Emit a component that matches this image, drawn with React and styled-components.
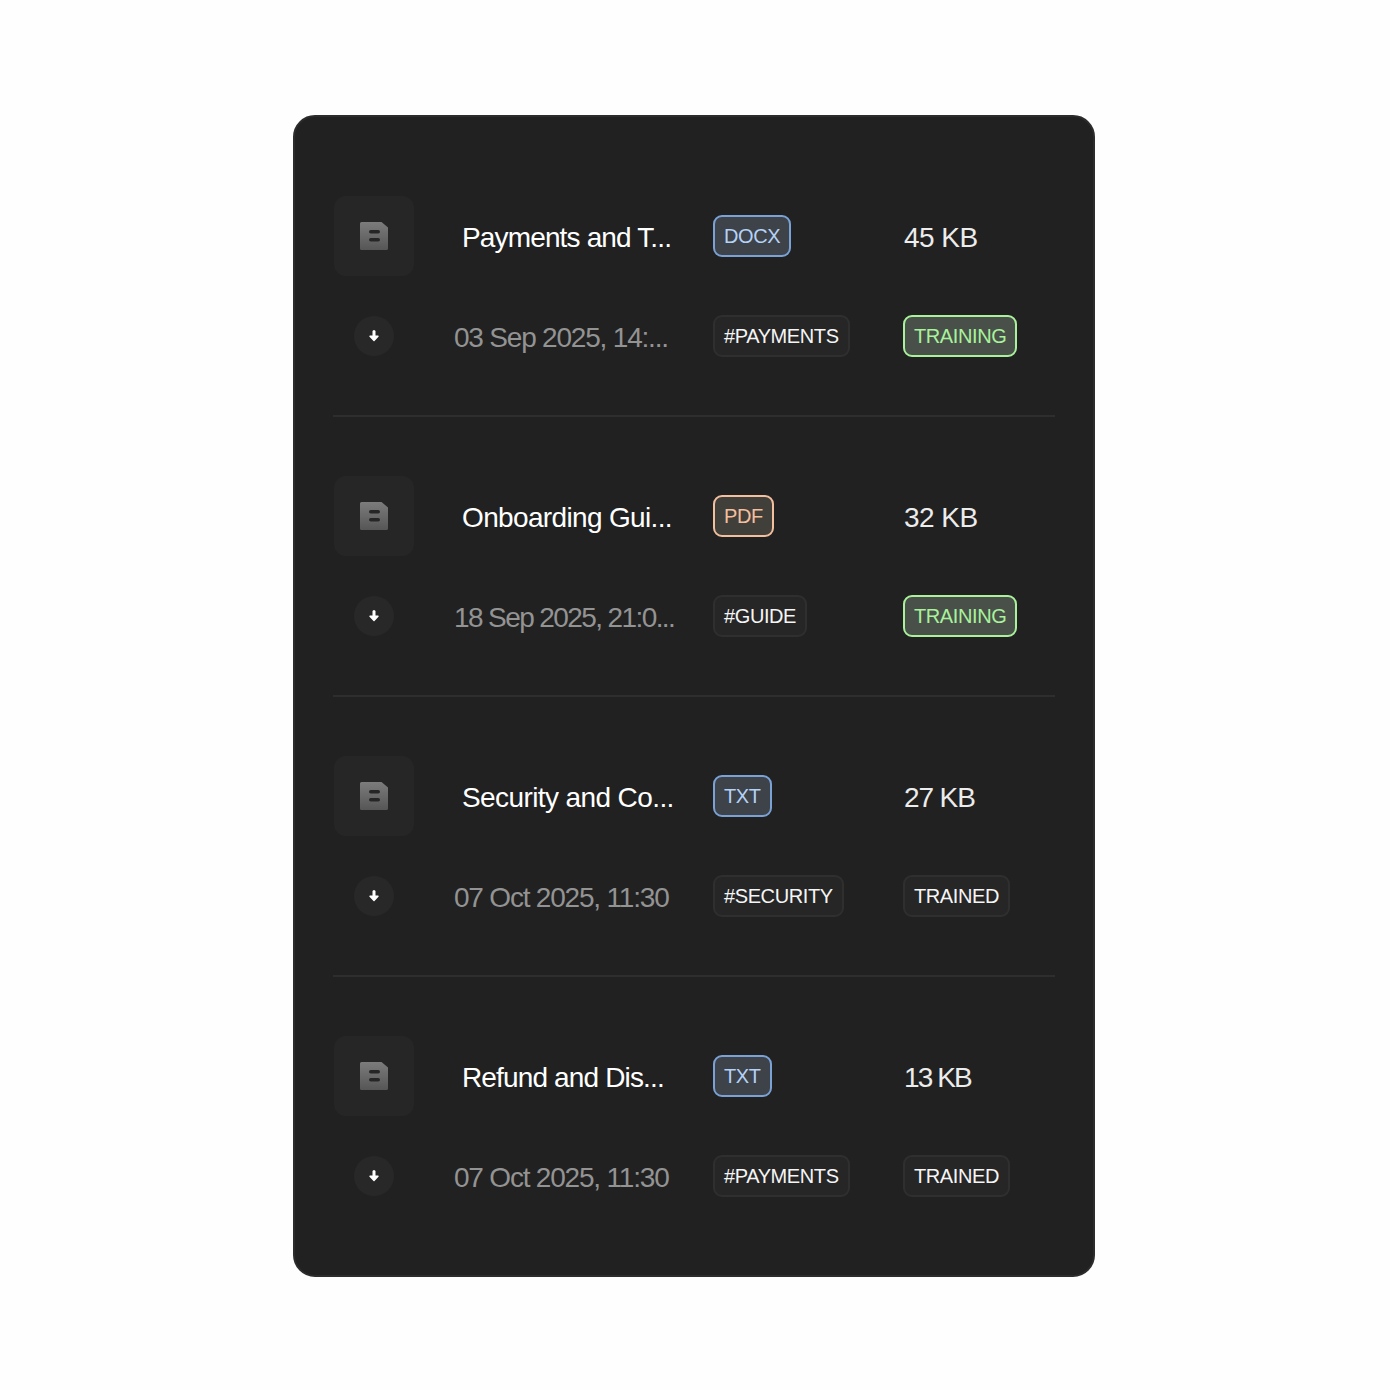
import React from 'react';
import styled, { createGlobalStyle } from 'styled-components';

const GlobalStyle = createGlobalStyle`
  html, body {
    margin: 0;
    padding: 0;
    background: #fefefe;
  }
  body {
    font-family: "Liberation Sans", Arial, sans-serif;
  }
`;

const Page = styled.div`
  display: flex;
  justify-content: center;
  box-sizing: border-box;
  width: 100%;
  min-height: 1390px;
  padding: 115px 2px 0 0;
`;

const Card = styled.div`
  box-sizing: border-box;
  width: 802px;
  height: 1162px;
  padding: 41px 38px 0 38px;
  background: #212121;
  border: 2px solid #2c2c2c;
  border-radius: 22px;
`;

const Row = styled.div`
  display: grid;
  grid-template-columns: 82px 298px 190px 152px;
  grid-template-rows: 80px 80px;
  row-gap: 20px;
  align-items: center;
  padding: 38px 0 39px;
  margin-bottom: 21px;
  border-bottom: ${(p) => (p.$last ? 'none' : '2px solid #2e2e2e')};
`;

const IconTile = styled.div`
  width: 80px;
  height: 80px;
  justify-self: center;
  display: flex;
  align-items: center;
  justify-content: center;
  background: #262626;
  border-radius: 12px;
`;

const RoundButton = styled.div`
  width: 40px;
  height: 40px;
  justify-self: center;
  display: flex;
  align-items: center;
  justify-content: center;
  background: #282828;
  border-radius: 50%;
`;

const Title = styled.div`
  padding: 4px 0 0 47px;
  font-size: 28px;
  letter-spacing: ${(p) => p.$spacing || '-0.85px'};
  line-height: 32px;
  color: #fff;
  white-space: nowrap;
`;

const DateText = styled.div`
  padding: 4px 0 0 39px;
  font-size: 28px;
  letter-spacing: ${(p) => p.$spacing || '-1.2px'};
  line-height: 32px;
  color: #939393;
  white-space: nowrap;
`;

const Size = styled.div`
  padding: 4px 0 0 1px;
  font-size: 28px;
  letter-spacing: ${(p) => p.$spacing || '-0.55px'};
  line-height: 32px;
  color: #ececec;
  white-space: nowrap;
`;

const tones = {
  blue: { border: '#7ba2d6', bg: '#3e4249', text: '#b4d2f7' },
  orange: { border: '#f4bf9f', bg: '#403f3a', text: '#f4bf9f' },
  green: { border: '#a9f29b', bg: '#485049', text: '#a9f29b' },
  plain: { border: '#2f2f2f', bg: '#262626', text: '#f5f5f5' },
};

const Badge = styled.span`
  justify-self: start;
  box-sizing: border-box;
  height: 42px;
  display: inline-flex;
  align-items: center;
  padding: 0 9px;
  font-size: 20px;
  letter-spacing: -0.4px;
  white-space: nowrap;
  border-radius: 9px;
  border: 2px solid ${(p) => tones[p.$tone].border};
  background: ${(p) => tones[p.$tone].bg};
  color: ${(p) => tones[p.$tone].text};
`;

const FileIcon = () => (
  <svg width="28" height="28" viewBox="0 0 28 28">
    <defs>
      <linearGradient id="fileFill" x1="0" y1="0" x2="0" y2="1">
        <stop offset="0" stopColor="#7c7c7c" />
        <stop offset="1" stopColor="#565656" />
      </linearGradient>
    </defs>
    <path
      d="M1.5 0H21.5L28 5.5V26.5a1.5 1.5 0 0 1-1.5 1.5H1.5A1.5 1.5 0 0 1 0 26.5V1.5A1.5 1.5 0 0 1 1.5 0Z"
      fill="url(#fileFill)"
    />
    <rect x="9" y="8" width="11" height="3.5" rx="1.75" fill="#262626" />
    <rect x="9" y="16" width="11" height="3.5" rx="1.75" fill="#262626" />
  </svg>
);

const ArrowIcon = () => (
  <svg width="12" height="12" viewBox="0 0 12 12">
    <path d="M6 1.5V6.5" stroke="#fff" strokeWidth="3" strokeLinecap="round" />
    <path d="M2 6.2H10L6 10.4Z" fill="#fff" stroke="#fff" strokeWidth="1.4" strokeLinejoin="round" />
  </svg>
);

const files = [
  { name: 'Payments and T...', date: '03 Sep 2025, 14:...', type: 'DOCX', tone: 'blue', size: '45 KB', tag: '#PAYMENTS', status: 'TRAINING' },
  { name: 'Onboarding Gui...', nameSpacing: '-0.65px', date: '18 Sep 2025, 21:0...', dateSpacing: '-1.6px', type: 'PDF', tone: 'orange', size: '32 KB', tag: '#GUIDE', status: 'TRAINING' },
  { name: 'Security and Co...', nameSpacing: '-0.6px', date: '07 Oct 2025, 11:30', type: 'TXT', tone: 'blue', size: '27 KB', sizeSpacing: '-1.1px', tag: '#SECURITY', status: 'TRAINED' },
  { name: 'Refund and Dis...', date: '07 Oct 2025, 11:30', type: 'TXT', tone: 'blue', size: '13 KB', sizeSpacing: '-1.9px', tag: '#PAYMENTS', status: 'TRAINED' },
];

const App = () => (
  <Page>
    <GlobalStyle />
    <Card>
      {files.map((f, i) => (
        <Row key={f.name} $last={i === files.length - 1}>
          <IconTile>
            <FileIcon />
          </IconTile>
          <Title $spacing={f.nameSpacing}>{f.name}</Title>
          <Badge $tone={f.tone}>{f.type}</Badge>
          <Size $spacing={f.sizeSpacing}>{f.size}</Size>
          <RoundButton>
            <ArrowIcon />
          </RoundButton>
          <DateText $spacing={f.dateSpacing}>{f.date}</DateText>
          <Badge $tone="plain">{f.tag}</Badge>
          <Badge $tone={f.status === 'TRAINING' ? 'green' : 'plain'}>{f.status}</Badge>
        </Row>
      ))}
    </Card>
  </Page>
);

export default App;
